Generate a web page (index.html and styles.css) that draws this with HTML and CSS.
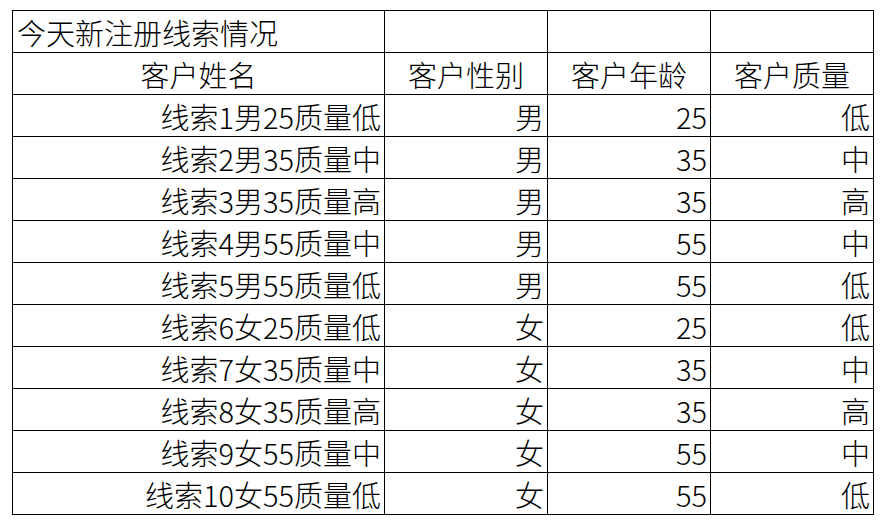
FILE: index.html
```html
<!DOCTYPE html>
<html lang="zh-CN">
<head>
<meta charset="utf-8">
<link rel="stylesheet" href="styles.css">
</head>
<body>
<table class="sheet">
  <colgroup>
    <col class="c-name">
    <col class="c-sm">
    <col class="c-sm">
    <col class="c-sm">
  </colgroup>
  <tr><td class="left">今天新注册线索情况</td><td></td><td></td><td></td></tr>
  <tr><td class="center">客户姓名</td><td class="center">客户性别</td><td class="center">客户年龄</td><td class="center">客户质量</td></tr>
  <tr><td>线索1男25质量低</td><td>男</td><td>25</td><td>低</td></tr>
  <tr><td>线索2男35质量中</td><td>男</td><td>35</td><td>中</td></tr>
  <tr><td>线索3男35质量高</td><td>男</td><td>35</td><td>高</td></tr>
  <tr><td>线索4男55质量中</td><td>男</td><td>55</td><td>中</td></tr>
  <tr><td>线索5男55质量低</td><td>男</td><td>55</td><td>低</td></tr>
  <tr><td>线索6女25质量低</td><td>女</td><td>25</td><td>低</td></tr>
  <tr><td>线索7女35质量中</td><td>女</td><td>35</td><td>中</td></tr>
  <tr><td>线索8女35质量高</td><td>女</td><td>35</td><td>高</td></tr>
  <tr><td>线索9女55质量中</td><td>女</td><td>55</td><td>中</td></tr>
  <tr><td>线索10女55质量低</td><td>女</td><td>55</td><td>低</td></tr>
</table>
</body>
</html>
```
FILE: styles.css
```css
html, body {
  margin: 0;
  background: #ffffff;
}
body {
  padding: 10px 0 0 12px;
  font-family: "Noto Sans CJK SC", "Noto Sans", sans-serif;
  font-weight: 300;
  color: #000000;
}
.sheet {
  border-collapse: collapse;
  table-layout: fixed;
  width: 862px;
}
.c-name { width: 372px; }
.c-sm { width: 163px; }
.sheet td {
  border: 1px solid #000000;
  height: 41px;
  padding: 0 3px 0 3px;
  font-size: 29px;
  font-weight: 300;
  line-height: 39px;
  vertical-align: bottom;
  text-align: right;
  white-space: nowrap;
  overflow: hidden;
}
.sheet td.left { text-align: left; padding-left: 4px; }
.sheet td.center { text-align: center; }
```
